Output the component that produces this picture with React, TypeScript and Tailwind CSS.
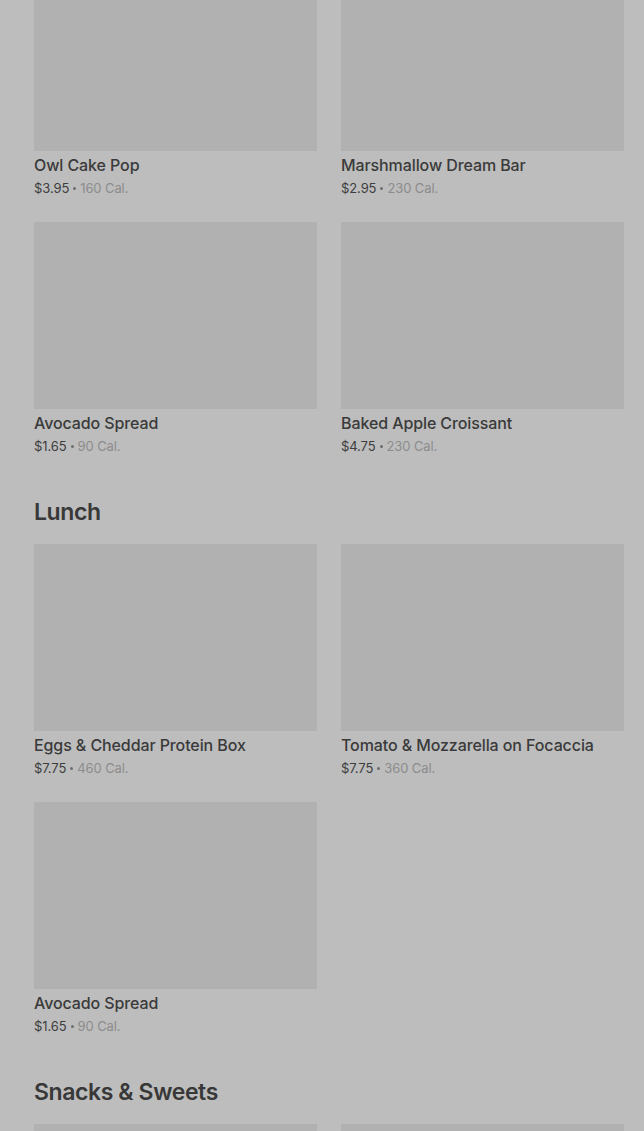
import React from 'react';

type Item = { name: string; price: string; cal: string };

const topItems: Item[] = [
  { name: 'Owl Cake Pop', price: '$3.95', cal: '160 Cal.' },
  { name: 'Marshmallow Dream Bar', price: '$2.95', cal: '230 Cal.' },
  { name: 'Avocado Spread', price: '$1.65', cal: '90 Cal.' },
  { name: 'Baked Apple Croissant', price: '$4.75', cal: '230 Cal.' },
];

const lunchItems: Item[] = [
  { name: 'Eggs & Cheddar Protein Box', price: '$7.75', cal: '460 Cal.' },
  { name: 'Tomato & Mozzarella on Focaccia', price: '$7.75', cal: '360 Cal.' },
  { name: 'Avocado Spread', price: '$1.65', cal: '90 Cal.' },
];

function ProductCard({ item }: { item: Item }) {
  return (
    <div className="flex flex-col">
      <div className="h-[187px] bg-[#b1b1b1]" />
      <h3 className="mt-[2px] text-[16px] leading-6 font-medium text-[#3a3a3a] tracking-[-0.1px]">{item.name}</h3>
      <p className="mt-[1px] flex items-center text-[13px] leading-5 text-[#8c8c8c] tracking-[-0.1px]">
        <span className="text-[#3d3d3d]">{item.price}</span>
        <span className="mx-[4px] inline-block h-[3px] w-[3px] rounded-full bg-[#6e6e6e]" />
        {item.cal}
      </p>
    </div>
  );
}

function Grid({ items }: { items: Item[] }) {
  return (
    <div className="grid grid-cols-2 gap-x-6 gap-y-6">
      {items.map((item, i) => (
        <ProductCard key={i} item={item} />
      ))}
    </div>
  );
}

export default function App() {
  return (
    <div
      className="h-[1131px] overflow-hidden bg-[#bdbdbd] pl-[34px] pr-[20px]"
      style={{ fontFamily: 'Inter, "Noto Sans", sans-serif' }}
    >
      {/* list is scrolled: first row of images is cut off */}
      <div className="-mt-[36px]">
        <Grid items={topItems} />
      </div>

      <h2 className="mt-[39px] mb-[17px] pt-[2px] text-[23px] leading-[30px] font-semibold text-[#383838] tracking-[-0.4px]">Lunch</h2>
      <Grid items={lunchItems} />

      <h2 className="mt-[39px] mb-[17px] pt-[2px] text-[23px] leading-[30px] font-semibold text-[#383838] tracking-[-0.4px]">Snacks &amp; Sweets</h2>
      <div className="grid grid-cols-2 gap-x-6">
        <div className="h-[187px] bg-[#b1b1b1]" />
        <div className="h-[187px] bg-[#b1b1b1]" />
      </div>
    </div>
  );
}
